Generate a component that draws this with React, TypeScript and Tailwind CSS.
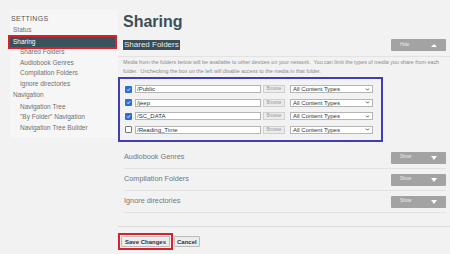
import { ChevronDown } from "lucide-react";

const folders = [
  { path: "/Public", on: true },
  { path: "/jeep", on: true },
  { path: "/SC_DATA", on: true },
  { path: "/Reading_Time", on: false },
];

const sections = ["Audiobook Genres", "Compilation Folders", "Ignore directories"];

function ToggleButton({ label, up }: { label: string; up?: boolean }) {
  return (
    <div className="w-[55px] h-[12px] bg-[#a3a3a3] rounded-[1px] flex items-center justify-between pl-[9px] pr-[9px]">
      <span className="text-[4.5px] text-[#eeeeee] leading-none">{label}</span>
      <span
        className={
          up
            ? "w-0 h-0 border-l-[3px] border-r-[3px] border-b-[3px] border-l-transparent border-r-transparent border-b-white"
            : "w-0 h-0 border-l-[3.5px] border-r-[3.5px] border-t-[4px] border-l-transparent border-r-transparent border-t-white"
        }
      />
    </div>
  );
}

export default function App() {
  return (
    <div className="w-[450px] h-[254px] bg-[#f2f2f2] flex overflow-hidden font-['Liberation_Sans',Arial,sans-serif]">
      {/* sidebar */}
      <aside className="w-[118px] shrink-0 pl-[10px] pt-[10px]">
        <div className="bg-[#f6f6f6] pt-[3px] pb-[4px] text-[6.5px] text-[#707070] leading-none">
          <div className="h-[10px] pl-[1px] flex items-center text-[7px] tracking-[0.3px] text-[#555]">SETTINGS</div>
          <div className="mt-[2px] h-[10px] pl-[3px] flex items-center">Status</div>
          <div className="mt-[2px] mr-[3px] h-[10px] bg-[#3b525c] text-white pl-[3px] flex items-center outline-2 outline-[#d9212b]">
            Sharing
          </div>
          <div className="pl-[10px]">
            <div className="h-[10.67px] flex items-center">Shared Folders</div>
            <div className="h-[10.67px] flex items-center">Audiobook Genres</div>
            <div className="h-[10.67px] flex items-center">Compilation Folders</div>
            <div className="h-[10.67px] flex items-center">Ignore directories</div>
          </div>
          <div className="pl-[3px] h-[12px] flex items-center">Navigation</div>
          <div className="pl-[10px]">
            <div className="h-[10.67px] flex items-center">Navigation Tree</div>
            <div className="h-[10.67px] flex items-center">"By Folder" Navigation</div>
            <div className="h-[10.67px] flex items-center">Navigation Tree Builder</div>
          </div>
        </div>
      </aside>

      {/* main */}
      <main className="flex-1">
        <h1 className="pl-[5px] pt-[13px] text-[16px] font-bold text-[#3d4e58] leading-[18px]">Sharing</h1>

        <div className="mt-[8px] flex items-center justify-between pr-[4px] pl-[5px]">
          <span className="bg-[#3b4d56] text-[#e6ecee] text-[8px] leading-[10px] px-[1px]">Shared Folders</span>
          <ToggleButton label="Hide" up />
        </div>
        <div className="mt-[5px] border-t border-[#e2e2e2]" />

        <p className="pl-[5px] pt-[1px] h-[20px] text-[5.35px] leading-[9px] text-[#8a8a8a] whitespace-nowrap">
          Media from the folders below will be available to other devices on your network.&nbsp; You can limit the types of media you share from each
          <br />
          folder.&nbsp; Unchecking the box on the left will disable access to the media in that folder.
        </p>

        <div className="w-[265px] h-[65px] border-2 border-[#3f3fb2] pl-[5px] pt-[6px] flex flex-col gap-[5.5px]">
          {folders.map((f) => (
            <div key={f.path} className="flex items-center h-[8px] shrink-0">
              <span
                className={
                  f.on
                    ? "w-[7px] h-[7px] rounded-[1px] bg-[#2a6fd6] flex items-center justify-center"
                    : "w-[7px] h-[7px] rounded-[1px] border border-[#777] bg-white"
                }
              >
                {f.on && (
                  <svg width="5" height="5" viewBox="0 0 10 10">
                    <path d="M2 5.2 L4.2 7.4 L8.2 2.8" stroke="white" strokeWidth="1.8" fill="none" />
                  </svg>
                )}
              </span>
              <div className="ml-[3px] w-[126px] h-[8px] bg-white border border-[#b5b5b5] text-[6px] leading-[6px] text-[#333] pl-[1px]">
                {f.path}
              </div>
              <div className="ml-[2px] w-[22px] h-[8px] bg-[#ececec] border border-[#cfcfcf] text-[4.5px] leading-[6px] text-[#999] text-center">
                Browse
              </div>
              <div className="ml-[5px] w-[83px] h-[8px] bg-white border border-[#b5b5b5] flex items-center justify-between pl-[2px] pr-[2px]">
                <span className="text-[6px] leading-none text-[#333]">All Content Types</span>
                <ChevronDown size={5} strokeWidth={4} className="text-[#333]" />
              </div>
            </div>
          ))}
        </div>

        <div className="mt-[5px] pl-[6px] pr-[4px]">
          {sections.map((s) => (
            <div key={s} className="h-[22px] flex items-center justify-between border-b border-[#e2e2e2]">
              <span className="text-[7.3px] text-[#777]">{s}</span>
              <ToggleButton label="Show" />
            </div>
          ))}
        </div>
        <div className="mt-[13px] border-t border-[#dcdcdc]" />

        <div className="mt-[6px] flex items-center">
          <div className="flex border-2 border-[#d9212b] p-[1px]">
            <button className="h-[11px] px-[3px] bg-[#ececec] border border-[#bbb] rounded-[1px] text-[6px] leading-none font-bold text-[#333]">
              Save Changes
            </button>
          </div>
          <button className="ml-[1px] h-[11px] px-[2px] bg-[#ececec] border border-[#bbb] rounded-[1px] text-[6px] leading-none font-bold text-[#333]">
            Cancel
          </button>
        </div>
      </main>
    </div>
  );
}
